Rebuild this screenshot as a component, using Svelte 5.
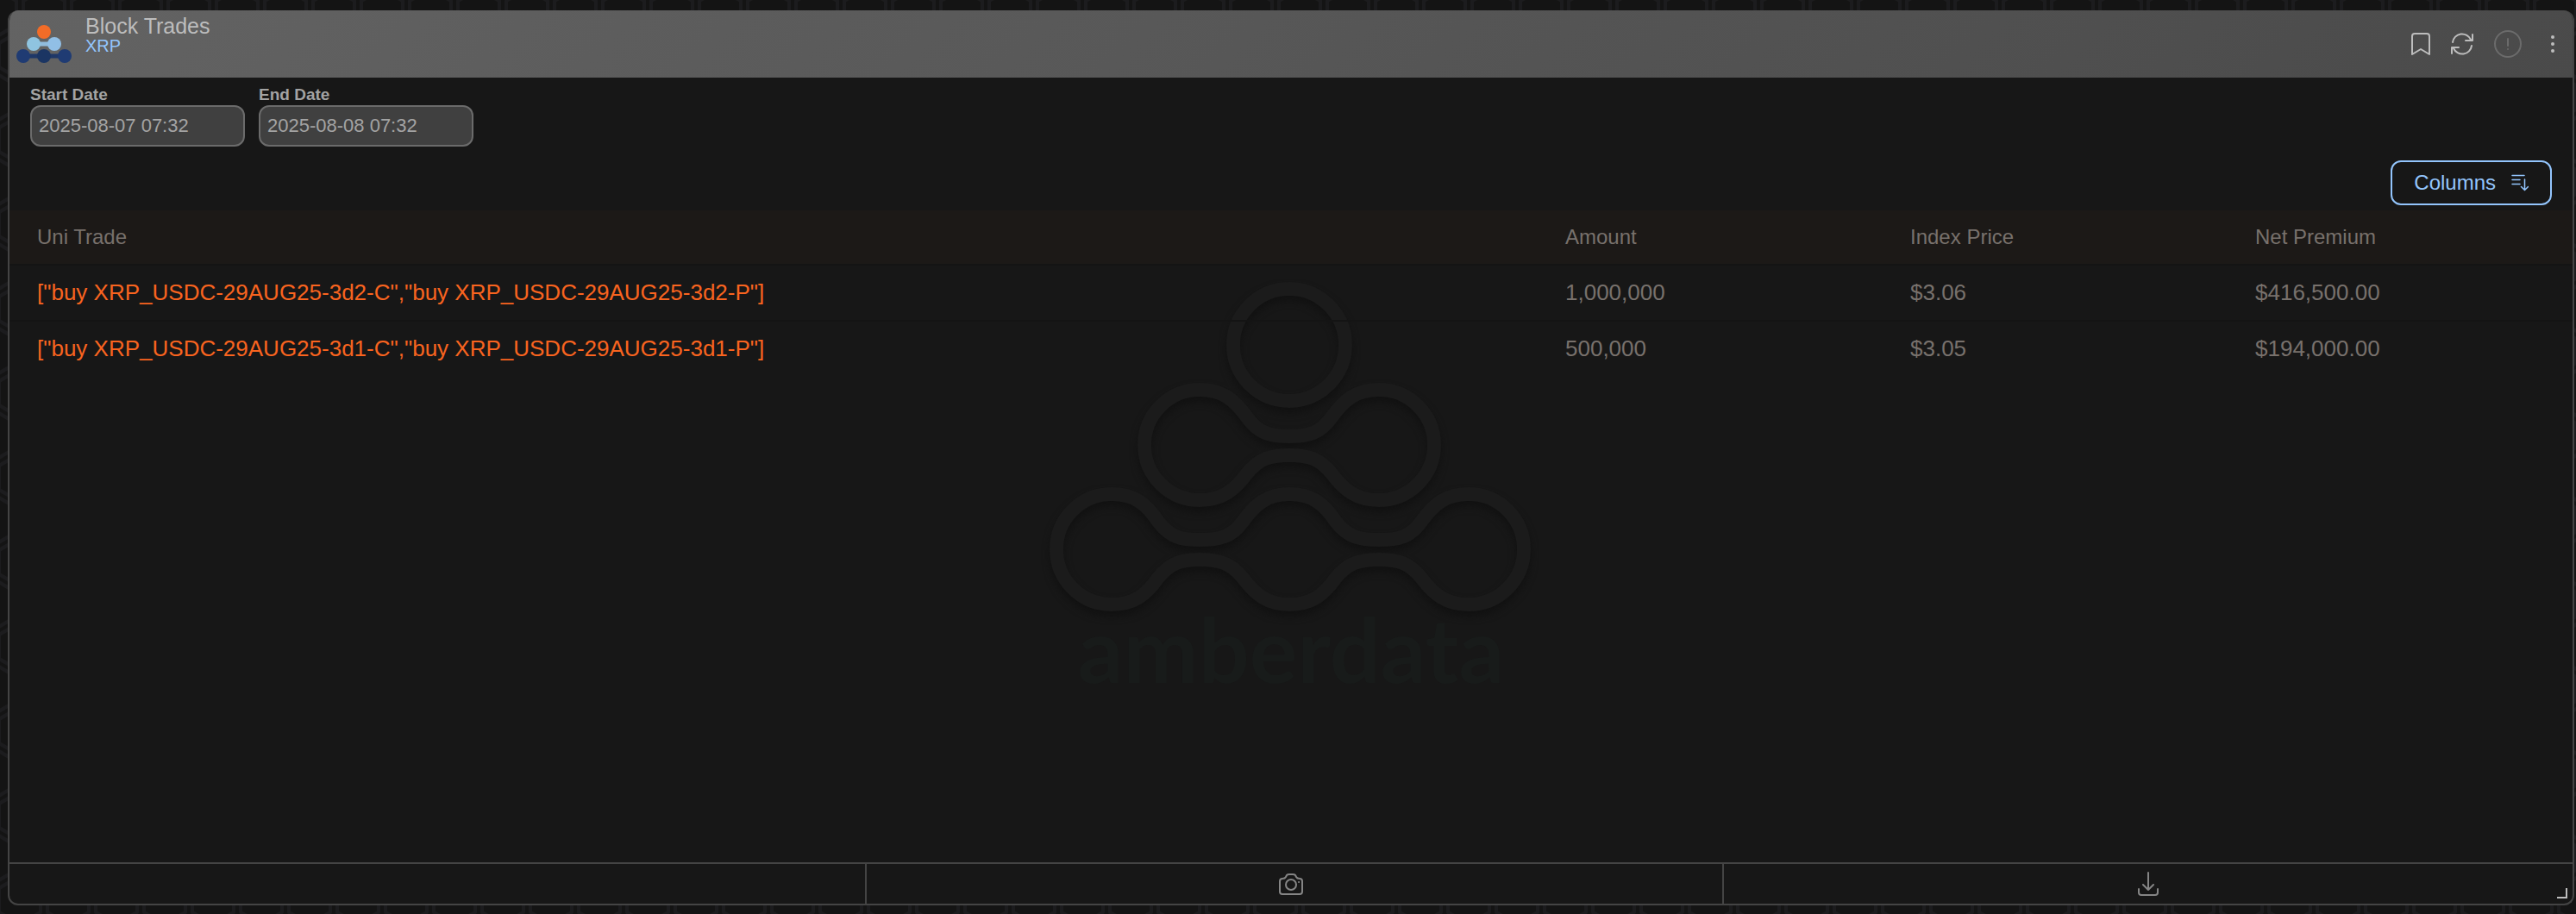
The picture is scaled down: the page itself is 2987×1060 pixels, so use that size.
<script lang="ts">
	const columns = ['Uni Trade', 'Amount', 'Index Price', 'Net Premium'];

	const trades = [
		{
			legs: '["buy XRP_USDC-29AUG25-3d2-C","buy XRP_USDC-29AUG25-3d2-P"]',
			amount: '1,000,000',
			index: '$3.06',
			premium: '$416,500.00'
		},
		{
			legs: '["buy XRP_USDC-29AUG25-3d1-C","buy XRP_USDC-29AUG25-3d1-P"]',
			amount: '500,000',
			index: '$3.05',
			premium: '$194,000.00'
		}
	];

	let start = $state('2025-08-07 07:32');
	let end = $state('2025-08-08 07:32');
</script>

<svelte:head>
	<title>Block Trades</title>
</svelte:head>

<div class="page">
	<!-- honeycomb behind the panel -->
	<svg class="honeycomb" aria-hidden="true">
		<defs>
			<pattern id="hex" width="56" height="98" patternUnits="userSpaceOnUse">
				<path d="M23 36l24 14v28l-24 14l-24 -14v-28z" />
				<path d="M79 36l24 14v28l-24 14l-24 -14v-28z" />
				<path d="M51 -13l24 14v28l-24 14l-24 -14v-28z" />
				<path d="M-5 -13l24 14v28l-24 14l-24 -14v-28z" />
				<path d="M51 85l24 14v28l-24 14l-24 -14v-28z" />
				<path d="M-5 85l24 14v28l-24 14l-24 -14v-28z" />
			</pattern>
		</defs>
		<rect width="100%" height="100%" fill="url(#hex)" stroke="none" />
	</svg>

	<section class="panel">
		<header>
			<svg class="logo" viewBox="0 0 64 46" aria-hidden="true">
				<circle cx="32" cy="9" r="8" fill="#f26c27" />
				<path d="M20 23H44" stroke="#91bcdc" stroke-width="5" />
				<circle cx="20" cy="23" r="8" fill="#8fc4e0" />
				<circle cx="44" cy="23" r="8" fill="#91bfe6" />
				<path d="M8 37H56" stroke="#1f3868" stroke-width="5" />
				<circle cx="8" cy="37" r="8" fill="#1f3b73" />
				<circle cx="32" cy="37" r="8" fill="#1b3563" />
				<circle cx="56" cy="37" r="8" fill="#1f3b73" />
			</svg>
			<div class="titles">
				<h1>Block Trades</h1>
				<p>XRP</p>
			</div>
			<div class="actions">
				<button aria-label="Bookmark">
					<svg width="24" height="28" viewBox="0 0 24 28">
						<path d="M2 26V5Q2 2 5 2H19Q22 2 22 5V26L12 20Z" />
					</svg>
				</button>
				<button aria-label="Refresh">
					<svg width="28" height="26" viewBox="0 0 28 26">
						<path d="M3 11A11 11 0 0 1 24 8M25 15A11 11 0 0 1 4 18M26 2V9H18M2 24V17H10" />
					</svg>
				</button>
				<button class="muted" aria-label="Alerts">
					<svg width="34" height="34" viewBox="0 0 34 34">
						<circle cx="17" cy="17" r="15" />
						<path d="M17 11V19M17 23V23.1" />
					</svg>
				</button>
				<button class="more" aria-label="More">
					<svg width="6" height="22" viewBox="0 0 6 22">
						<circle cx="3" cy="3" r="2" />
						<circle cx="3" cy="11" r="2" />
						<circle cx="3" cy="19" r="2" />
					</svg>
				</button>
			</div>
		</header>

		<div class="filters">
			<div class="field">
				<label for="start">Start Date</label>
				<input id="start" type="text" bind:value={start} />
			</div>
			<div class="field">
				<label for="end">End Date</label>
				<input id="end" type="text" bind:value={end} />
			</div>
		</div>

		<div class="toolbar">
			<button class="columns">
				Columns
				<svg width="20" height="20" viewBox="0 0 20 20" aria-hidden="true">
					<path d="M1 1.5H15M1 6.5H10M1 11.5H10M15.5 6V18M11.5 14.5L15.5 18.5L19.5 14.5" />
				</svg>
			</button>
		</div>

		<main>
			<svg class="watermark" viewBox="-3 0 600 520" aria-hidden="true">
				<g class="shade">
					<circle cx="295" cy="90" r="65" />
					<path d="M191 142A64 64 0 1 0 191 270C217 270 231 259 246 239C260 222 272 218 295 218C318 218 330 222 344 239C359 259 373 270 399 270A64 64 0 1 0 399 142C373 142 359 153 344 174C331 192 318 196 295 196C272 196 259 192 246 174C231 153 217 142 191 142Z" />
					<path d="M89 263A64 64 0 1 0 89 391C115 391 129 380 143 360C157 343 169 339 191 339C214 339 227 343 241 360C256 380 270 391 295 391C321 391 335 380 349 360C363 343 376 339 399 339C422 339 434 343 448 360C463 380 477 391 503 391A64 64 0 1 0 503 263C477 263 463 274 448 295C435 313 422 316 399 316C376 316 363 313 349 295C335 274 321 263 295 263C270 263 256 274 241 295C228 313 214 316 191 316C169 316 157 313 143 295C129 274 115 263 89 263Z" />
				</g>
				<text x="297" y="482" text-anchor="middle">amberdata</text>
			</svg>

			<table>
				<thead>
					<tr>
						{#each columns as column}
							<th scope="col">{column}</th>
						{/each}
					</tr>
				</thead>
				<tbody>
					{#each trades as trade}
						<tr>
							<td class="legs">{trade.legs}</td>
							<td>{trade.amount}</td>
							<td>{trade.index}</td>
							<td>{trade.premium}</td>
						</tr>
					{/each}
				</tbody>
			</table>
		</main>

		<footer>
			<div class="cell"></div>
			<button class="cell" aria-label="Screenshot">
				<svg width="28" height="25" viewBox="0 0 28 25">
					<path d="M1 9Q1 6 4 6Q7 6 8 4L9 2Q10 1 12 1H16Q18 1 19 2L20 4Q21 6 24 6Q27 6 27 9V21Q27 24 24 24H4Q1 24 1 21Z" />
					<circle cx="14" cy="13" r="6" />
					<path d="M23 10H23.1" />
				</svg>
			</button>
			<button class="cell" aria-label="Download">
				<svg width="26" height="30" viewBox="0 0 26 30">
					<path d="M13 2V22M7 16L13 22L19 16M2 21V25Q2 28 5 28H21Q24 28 24 25V21" />
				</svg>
			</button>
		</footer>
		<span class="grip"></span>
	</section>
</div>

<style>
	:global(body) {
		margin: 0;
		background: #141414;
	}

	.page {
		position: relative;
		box-sizing: border-box;
		display: flex;
		min-height: 100vh;
		padding: 12px 2px 10px 9px;
		background: #141414;
		color: #a3a3a3;
		font-family: 'Liberation Sans', Arial, sans-serif;
		font-size: 24px;
	}

	.honeycomb {
		position: absolute;
		inset: 0;
		width: 100%;
		height: 100%;
		fill: none;
		stroke: #1c1c1e;
		stroke-width: 4;
	}

	.panel {
		position: relative;
		box-sizing: border-box;
		flex: 1;
		display: flex;
		flex-direction: column;
		overflow: hidden;
		background: #171717;
		border: 2px solid #444;
		border-top: 0;
		border-radius: 12px;
	}

	button {
		padding: 0;
		border: 0;
		background: none;
		color: inherit;
		font: inherit;
		cursor: pointer;
	}

	svg {
		display: block;
		fill: none;
		stroke-linecap: round;
		stroke-linejoin: round;
	}

	/* header */
	header {
		display: flex;
		align-items: center;
		box-sizing: border-box;
		height: 78px;
		margin: 0 -2px;
		padding: 0 22px 0 10px;
		background: linear-gradient(135deg, #636363, #4a4a4a);
	}

	.logo {
		width: 64px;
		height: 46px;
	}

	.titles {
		align-self: flex-start;
		flex: 1;
		padding: 5px 0 0 16px;
	}

	h1,
	p {
		margin: 0;
		font-weight: 400;
	}

	h1 {
		color: #bdbdbd;
		font-size: 25px;
		line-height: 26px;
	}

	p {
		color: #93c5fd;
		font-size: 20px;
		line-height: 20px;
	}

	.actions {
		display: flex;
		align-items: center;
		gap: 22px;
	}

	.actions svg {
		stroke: #bdbdbd;
		stroke-width: 2;
	}

	.actions .muted svg {
		stroke: #6b6b6b;
	}

	.actions .more {
		margin-left: 10px;
	}

	.actions .more svg {
		fill: #bdbdbd;
		stroke: none;
	}

	/* filters */
	.filters {
		display: flex;
		gap: 16px;
		padding: 10px 24px 0;
	}

	.field {
		display: flex;
		flex-direction: column;
		gap: 2px;
	}

	label {
		font-size: 19px;
		font-weight: 700;
		line-height: 20px;
	}

	input {
		box-sizing: border-box;
		width: 249px;
		height: 48px;
		padding: 0 8px;
		border: 2px solid #6b6b6b;
		border-radius: 12px;
		background: #404040;
		color: #a3a3a3;
		font: inherit;
		font-size: 22px;
	}

	.toolbar {
		display: flex;
		justify-content: flex-end;
		padding: 16px 24px 6px;
	}

	.columns {
		display: flex;
		align-items: center;
		gap: 18px;
		height: 52px;
		padding: 0 25px;
		border: 2px solid #93c5fd;
		border-radius: 12px;
		color: #93c5fd;
	}

	.columns svg {
		stroke: #93c5fd;
		stroke-width: 1.5;
	}

	/* table */
	main {
		position: relative;
		flex: 1;
	}

	table {
		position: relative;
		width: 100%;
		border-collapse: separate;
		border-spacing: 0;
		table-layout: fixed;
		color: #78716c;
	}

	th,
	td {
		box-sizing: border-box;
		width: 400px;
		height: 65px;
		padding: 0 32px;
		border-bottom: 2px solid #141414;
		font-weight: 400;
		text-align: left;
	}

	th {
		height: 64px;
		background: #1c1917;
	}

	th:first-child {
		width: auto;
	}

	td {
		font-size: 26px;
	}

	tbody tr:last-child td {
		border-bottom-color: transparent;
	}

	.legs {
		color: #f9641f;
	}

	.watermark {
		position: absolute;
		top: 66px;
		left: 50%;
		width: 600px;
		height: 520px;
		overflow: visible;
		transform: translateX(-50%);
	}

	.shade {
		stroke: #1b1b1b;
		stroke-width: 16;
		filter: drop-shadow(0 6px 4px #111);
	}

	.watermark text {
		fill: #181b1a;
		font-family: Lato, sans-serif;
		font-size: 104px;
		font-weight: 700;
	}

	/* footer */
	footer {
		display: flex;
		height: 46px;
		border-top: 2px solid #444;
	}

	.cell {
		flex: 1;
		display: flex;
		align-items: center;
		justify-content: center;
	}

	.cell:not(:last-child) {
		padding-right: 8px;
		border-right: 2px solid #444;
	}

	.cell svg {
		stroke: #858585;
		stroke-width: 2;
	}

	.grip {
		position: absolute;
		right: 6px;
		bottom: 6px;
		width: 10px;
		height: 10px;
		border-right: 2px solid #bdbdbd;
		border-bottom: 2px solid #bdbdbd;
	}
</style>
